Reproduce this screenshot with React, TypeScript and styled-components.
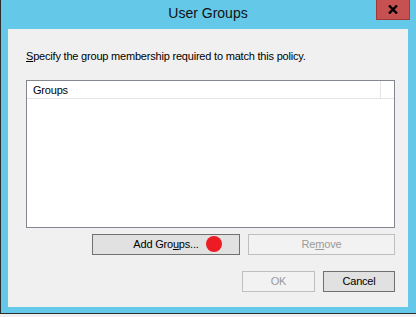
import React from "react";
import styled, { createGlobalStyle } from "styled-components";

const GlobalStyle = createGlobalStyle`
  html, body {
    margin: 0;
    padding: 0;
    background: #f0f0f0;
  }
  body {
    font-family: "Liberation Sans", Arial, sans-serif;
    font-size: 11px;
    letter-spacing: -0.2px;
    color: #000;
  }
`;

const Window = styled.div`
  width: 400px;
  height: 307px;
  background: #64c8e9;
  border-left: 1px solid #2d2d2d;
  border-bottom: 1px solid #2d2d2d;
  padding: 0 8px 6px 7px;
  display: flex;
  flex-direction: column;
`;

const TitleBar = styled.div`
  height: 29px;
  display: grid;
  grid-template-columns: 1fr auto 1fr;
  align-items: start;
`;

const Title = styled.div`
  grid-column: 2;
  padding-top: 5px;
  font-size: 14px;
  line-height: 16px;
  letter-spacing: 0;
  color: #111;
`;

const CloseButton = styled.div`
  grid-column: 3;
  justify-self: end;
  margin-right: -2px;
  width: 34px;
  height: 20px;
  box-sizing: border-box;
  background: #c75050;
  border: 1px solid #9e3a3a;
  border-top: none;
  display: flex;
  align-items: center;
  justify-content: center;
`;

const Content = styled.div`
  flex: 1;
  background: #f0f0f0;
  padding: 19px 13px 0 18px;
  display: flex;
  flex-direction: column;
`;

const Instruction = styled.div`
  line-height: 15px;
  height: 15px;
  white-space: nowrap;
  padding-top: 1px;
`;

const Key = styled.span`
  text-decoration: underline;
  text-underline-offset: 1px;
`;

const ListBox = styled.div`
  margin-top: 16px;
  height: 148px;
  box-sizing: border-box;
  border: 1px solid #828790;
  background: #fff;
`;

const ListHeader = styled.div`
  height: 18px;
  box-sizing: border-box;
  border-bottom: 1px solid #e5e5e5;
  display: flex;
`;

const HeaderCell = styled.div<{ width: number }>`
  width: ${({ width }) => width}px;
  box-sizing: border-box;
  border-right: 1px solid #e5e5e5;
  padding: 2px 0 0 6px;
  line-height: 15px;
`;

const ButtonRow = styled.div<{ top: number }>`
  margin-top: ${({ top }) => top}px;
  display: flex;
  justify-content: flex-end;
  gap: 8px;
`;

const Button = styled.div<{ width: number; disabled?: boolean }>`
  position: relative;
  width: ${({ width }) => width}px;
  height: 21px;
  box-sizing: border-box;
  border: 1px solid ${({ disabled }) => (disabled ? "#bfbfbf" : "#707070")};
  background: ${({ disabled }) => (disabled ? "#f2f2f2" : "#e1e1e1")};
  color: ${({ disabled }) => (disabled ? "#9a9a9a" : "#000")};
  display: flex;
  align-items: center;
  justify-content: center;
  line-height: 15px;
`;

const Marker = styled.div`
  position: absolute;
  left: 113px;
  top: 1px;
  width: 16px;
  height: 16px;
  border-radius: 50%;
  background: #ed1c24;
`;

const App = () => {
  return (
    <>
      <GlobalStyle />
      <Window>
        <TitleBar>
          <Title>User Groups</Title>
          <CloseButton>
            <svg width="10" height="9" viewBox="0 0 10 9">
              <path d="M1 0.5 L9 8.5 M9 0.5 L1 8.5" stroke="#000" strokeWidth="2.4" />
            </svg>
          </CloseButton>
        </TitleBar>
        <Content>
          <Instruction>
            <Key>S</Key>pecify the group membership required to match this policy.
          </Instruction>
          <ListBox>
            <ListHeader>
              <HeaderCell width={354}>Groups</HeaderCell>
            </ListHeader>
          </ListBox>
          <ButtonRow top={6}>
            <Button width={148}>
              Add Gro<Key>u</Key>ps...
              <Marker />
            </Button>
            <Button width={147} disabled>
              Re<Key>m</Key>ove
            </Button>
          </ButtonRow>
          <ButtonRow top={16}>
            <Button width={73} disabled>
              OK
            </Button>
            <Button width={72}>Cancel</Button>
          </ButtonRow>
        </Content>
      </Window>
    </>
  );
};

export default App;
